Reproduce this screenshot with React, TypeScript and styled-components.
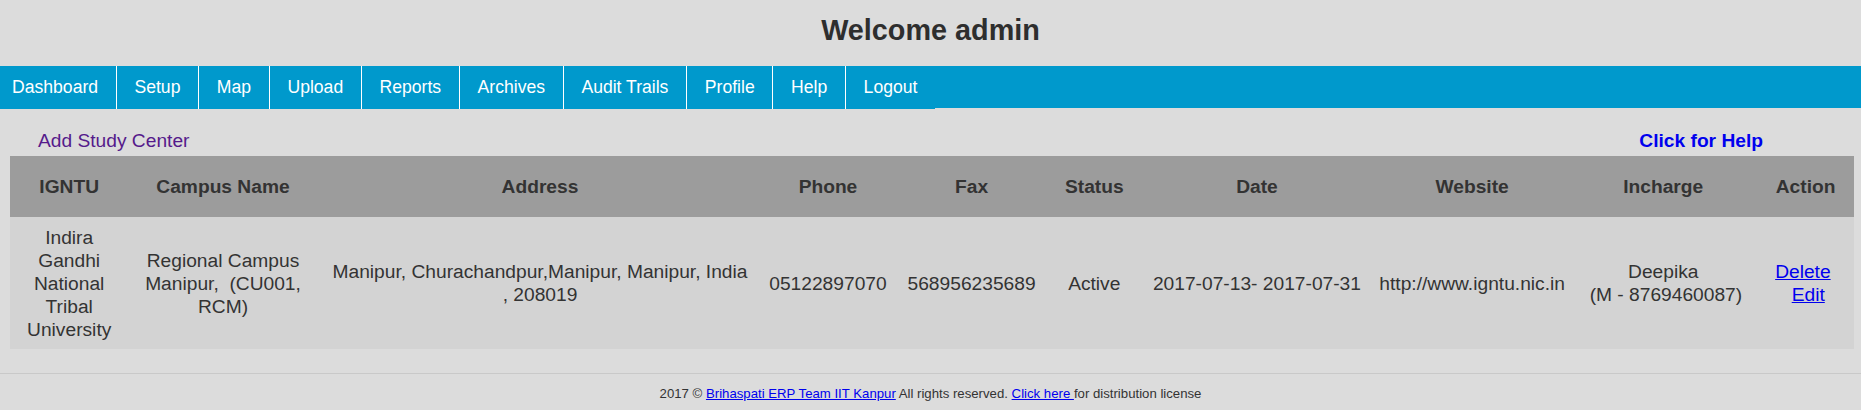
import React from "react";
import styled, { createGlobalStyle } from "styled-components";

const COLORS = {
  PAGE: "#dcdcdc",
  NAV: "#0099cc",
  HEAD: "#9c9c9c",
  ROW: "#d3d3d3",
  TEXT: "#333333",
  LINK: "#0000ee",
  VISITED: "#551a8b",
  RULE: "#c9c9c9",
};

const GlobalStyle = createGlobalStyle`
  html, body {
    margin: 0;
    background: ${COLORS.PAGE};
  }
  body {
    font-family: "Liberation Sans", Arial, sans-serif;
    color: ${COLORS.TEXT};
  }
`;

const Header = styled.header`
  padding: 14px 0 19px;
  text-align: center;
`;

const Title = styled.h1`
  margin: 0;
  font-size: 28.8px;
  line-height: 33px;
  font-weight: bold;
  color: #2e2e2e;
`;

const NavBar = styled.ul`
  display: flex;
  align-items: flex-start;
  height: 42px;
  margin: 0;
  padding: 0;
  list-style: none;
  background: ${COLORS.NAV};
`;

const NavItem = styled.li`
  height: 43px;
  line-height: 43px;
  padding: 0 17.7px;
  border-right: 1px solid #fff;
  background: ${COLORS.NAV};
  color: #fff;
  font-size: 17.6px;
  white-space: nowrap;

  &:first-child {
    padding-left: 12px;
  }
  &:last-child {
    border-right: none;
  }
`;

const Toolbar = styled.div`
  display: flex;
  justify-content: space-between;
  align-items: baseline;
  margin-top: 22px;
  padding: 0 98px 0 38px;
  font-size: 19.2px;
  line-height: 22px;
`;

const AddLink = styled.a`
  color: ${COLORS.VISITED};
  text-decoration: none;
`;

const HelpLink = styled.a`
  color: ${COLORS.LINK};
  font-weight: bold;
  text-decoration: none;
`;

const Table = styled.table`
  margin: 4px 0 0 10px;
  width: 1844px;
  table-layout: fixed;
  border-collapse: collapse;
  font-size: 19.2px;
`;

const Col = styled.col<{ $w: number }>`
  width: ${(p) => p.$w}px;
`;

const HeadCell = styled.th`
  height: 61px;
  padding: 0 3px;
  background: ${COLORS.HEAD};
  color: ${COLORS.TEXT};
  font-weight: bold;
  text-align: center;
  vertical-align: middle;
  white-space: nowrap;
`;

const Cell = styled.td<{ $nowrap?: boolean; $pad?: number }>`
  height: 132px;
  padding: 0 ${(p) => p.$pad ?? 3}px;
  background: ${COLORS.ROW};
  color: ${COLORS.TEXT};
  line-height: 23px;
  text-align: center;
  vertical-align: middle;
  white-space: ${(p) => (p.$nowrap ? "nowrap" : "normal")};
`;

const ActionLink = styled.a`
  color: ${COLORS.LINK};
  text-decoration: underline;
`;

const Footer = styled.footer`
  margin-top: 24px;
  border-top: 1px solid ${COLORS.RULE};
  padding: 12px 0;
  text-align: center;
  font-size: 13.2px;
  line-height: 15px;
  color: ${COLORS.TEXT};

  a {
    color: ${COLORS.LINK};
    text-decoration: underline;
  }
`;

const MENU = [
  "Dashboard",
  "Setup",
  "Map",
  "Upload",
  "Reports",
  "Archives",
  "Audit Trails",
  "Profile",
  "Help",
  "Logout",
];

const COLUMNS = [
  { title: "IGNTU", w: 118.4 },
  { title: "Campus Name", w: 189.2 },
  { title: "Address", w: 444.8 },
  { title: "Phone", w: 131.2 },
  { title: "Fax", w: 156 },
  { title: "Status", w: 89.4 },
  { title: "Date", w: 236 },
  { title: "Website", w: 194.4 },
  { title: "Incharge", w: 187.8 },
  { title: "Action", w: 96.8 },
];

export default function App() {
  return (
    <>
      <GlobalStyle />
      <Header>
        <Title>Welcome admin</Title>
      </Header>
      <nav>
        <NavBar>
          {MENU.map((m) => (
            <NavItem key={m}>{m}</NavItem>
          ))}
        </NavBar>
      </nav>
      <Toolbar>
        <AddLink href="#">Add Study Center</AddLink>
        <HelpLink href="#">Click for Help</HelpLink>
      </Toolbar>
      <Table>
        <colgroup>
          {COLUMNS.map((c) => (
            <Col key={c.title} $w={c.w} />
          ))}
        </colgroup>
        <thead>
          <tr>
            {COLUMNS.map((c) => (
              <HeadCell key={c.title}>{c.title}</HeadCell>
            ))}
          </tr>
        </thead>
        <tbody>
          <tr>
            <Cell>Indira Gandhi National Tribal University</Cell>
            <Cell>Regional Campus Manipur,{"\u00a0"} (CU001, RCM)</Cell>
            <Cell $pad={10}>
              Manipur, Churachandpur,Manipur, Manipur, India , 208019
            </Cell>
            <Cell $nowrap>05122897070</Cell>
            <Cell $nowrap>568956235689</Cell>
            <Cell>Active</Cell>
            <Cell $nowrap>2017-07-13- 2017-07-31</Cell>
            <Cell $nowrap>http://www.igntu.nic.in</Cell>
            <Cell>
              Deepika
              <br />
              {"\u00a0"}(M - 8769460087)
            </Cell>
            <Cell>
              <ActionLink href="#">Delete</ActionLink>
              {"\u00a0"}
              <br />
              {"\u00a0"}
              <ActionLink href="#">Edit</ActionLink>
            </Cell>
          </tr>
        </tbody>
      </Table>
      <Footer>
        2017 © <a href="#">Brihaspati ERP Team IIT Kanpur</a> All rights
        reserved. <a href="#">Click here </a>for distribution license
      </Footer>
    </>
  );
}
